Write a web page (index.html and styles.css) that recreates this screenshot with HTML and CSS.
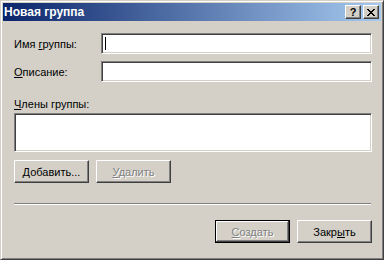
FILE: index.html
```html
<!DOCTYPE html>
<html lang="ru">
<head>
    <meta charset="UTF-8">
    <title>Новая группа</title>
    <link rel="stylesheet" href="styles.css">
</head>
<body>
    <div class="window">
        <div class="titlebar">
            <span class="title">Новая группа</span>
            <div class="caption-buttons">
                <button class="cap help">?</button>
                <button class="cap close">
                    <svg width="8" height="7" viewBox="0 0 8 7">
                        <path d="M0 0h2v1h-2zM6 0h2v1h-2zM1 1h2v1h-2zM5 1h2v1h-2zM2 2h4v1h-4zM3 3h2v1h-2zM2 4h4v1h-4zM1 5h2v1h-2zM5 5h2v1h-2zM0 6h2v1h-2zM6 6h2v1h-2z" fill="#000"/>
                    </svg>
                </button>
            </div>
        </div>

        <div class="content">
            <div class="field-row">
                <label class="field-label">Имя <u>г</u>руппы:</label>
                <div class="edit"><span class="caret"></span></div>
            </div>
            <div class="field-row">
                <label class="field-label"><u>О</u>писание:</label>
                <div class="edit"></div>
            </div>

            <label class="members-label"><u>Ч</u>лены группы:</label>
            <div class="listbox"></div>

            <div class="button-row">
                <button class="btn"><u>Д</u>обавить...</button>
                <button class="btn" disabled><u>У</u>далить</button>
            </div>

            <div class="separator"></div>

            <div class="footer">
                <button class="btn default" disabled><u>С</u>оздать</button>
                <button class="btn">Закр<u>ы</u>ть</button>
            </div>
        </div>
    </div>
</body>
</html>
```

FILE: styles.css
```css
body {
    margin: 0;
    padding: 0;
    font-family: "Liberation Sans", Arial, sans-serif;
    font-size: 11px;
    color: #000;
    background-color: #d4d0c8;
}

.window {
    width: 384px;
    height: 260px;
    box-sizing: border-box;
    background-color: #d4d0c8;
    border: 1px solid;
    border-color: #d4d0c8 #404040 #404040 #d4d0c8;
    box-shadow: inset 1px 1px #fff, inset -1px -1px #808080;
    padding: 2px;
    display: flex;
    flex-direction: column;
}

.titlebar {
    height: 18px;
    flex-shrink: 0;
    display: flex;
    align-items: center;
    justify-content: space-between;
    background: linear-gradient(to right, #0a246a, #a6caf0);
    padding: 0 2px 0 1px;
}

.title {
    color: #fff;
    font-weight: bold;
    font-size: 12px;
}

.caption-buttons {
    display: flex;
    gap: 2px;
}

.cap {
    width: 16px;
    height: 14px;
    padding: 0;
    margin: 0;
    box-sizing: border-box;
    background-color: #d4d0c8;
    border: 1px solid;
    border-color: #fff #404040 #404040 #fff;
    box-shadow: inset -1px -1px #808080, inset 1px 1px #d4d0c8;
    display: flex;
    align-items: center;
    justify-content: center;
    font-family: "Liberation Sans", Arial, sans-serif;
    font-weight: bold;
    font-size: 11px;
    line-height: 1;
    color: #000;
}

.content {
    flex: 1;
    padding: 12px 9px 0 11px;
    display: flex;
    flex-direction: column;
}

.field-row {
    display: flex;
    align-items: center;
    height: 21px;
    margin-bottom: 7px;
}

.field-label {
    width: 87px;
}

.edit,
.listbox {
    box-sizing: border-box;
    background-color: #fff;
    border: 1px solid;
    border-color: #808080 #fff #fff #808080;
    box-shadow: inset 1px 1px #404040, inset -1px -1px #d4d0c8;
}

.edit {
    width: 271px;
    height: 21px;
    padding: 3px 0 0 3px;
}

.caret {
    display: block;
    width: 1px;
    height: 13px;
    background-color: #000;
}

.members-label {
    margin-top: 9px;
    height: 13px;
    line-height: 13px;
}

.listbox {
    margin-top: 2px;
    width: 358px;
    height: 39px;
    flex-shrink: 0;
}

.button-row {
    display: flex;
    gap: 7px;
    margin-top: 8px;
}

.btn {
    width: 75px;
    height: 23px;
    padding: 0;
    box-sizing: border-box;
    background-color: #d4d0c8;
    border: 1px solid;
    border-color: #fff #404040 #404040 #fff;
    box-shadow: inset -1px -1px #808080, inset 1px 1px #d4d0c8;
    font-family: "Liberation Sans", Arial, sans-serif;
    font-size: 11px;
    color: #000;
}

.btn:disabled {
    color: #808080;
    text-shadow: 1px 1px #fff;
}

.btn.default {
    border-color: #000;
    box-shadow: inset -1px -1px #404040, inset 1px 1px #fff, inset -2px -2px #808080, inset 2px 2px #d4d0c8;
}

.separator {
    margin-top: 20px;
    width: 357px;
    height: 0;
    border-top: 1px solid #808080;
    border-bottom: 1px solid #fff;
}

.footer {
    display: flex;
    justify-content: flex-end;
    gap: 7px;
    margin-top: 15px;
    width: 358px;
}
```
